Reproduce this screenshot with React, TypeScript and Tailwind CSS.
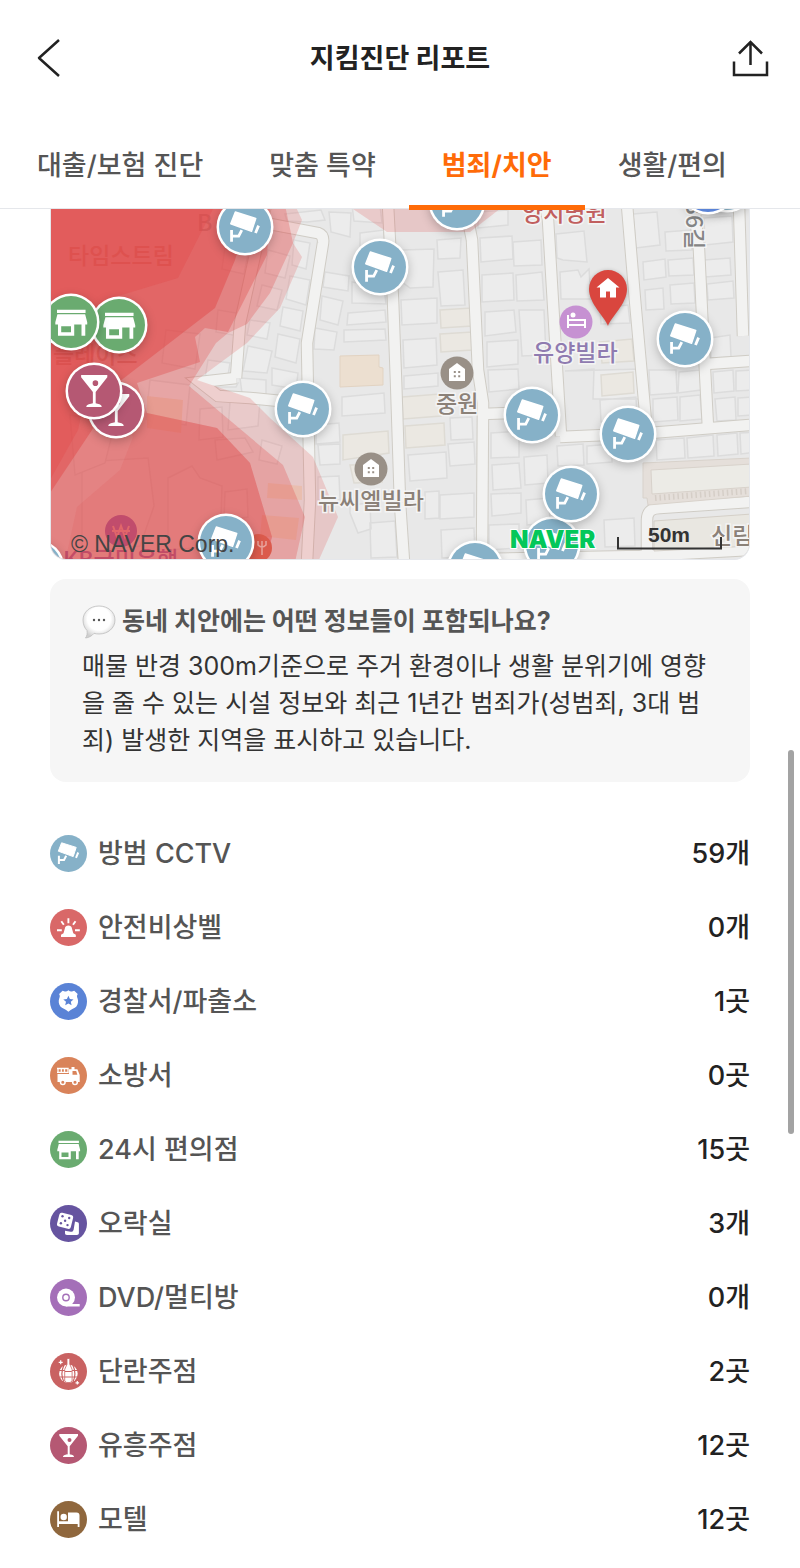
import type { ReactNode } from 'react'

type IconName =
  | 'cctv'
  | 'bell'
  | 'police'
  | 'fire'
  | 'store'
  | 'arcade'
  | 'dvd'
  | 'disco'
  | 'bar'
  | 'motel'

const tabs = ['대출/보험 진단', '맞춤 특약', '범죄/치안', '생활/편의']

const facilities: { icon: IconName; label: string; value: string }[] = [
  { icon: 'cctv', label: '방범 CCTV', value: '59개' },
  { icon: 'bell', label: '안전비상벨', value: '0개' },
  { icon: 'police', label: '경찰서/파출소', value: '1곳' },
  { icon: 'fire', label: '소방서', value: '0곳' },
  { icon: 'store', label: '24시 편의점', value: '15곳' },
  { icon: 'arcade', label: '오락실', value: '3개' },
  { icon: 'dvd', label: 'DVD/멀티방', value: '0개' },
  { icon: 'disco', label: '단란주점', value: '2곳' },
  { icon: 'bar', label: '유흥주점', value: '12곳' },
  { icon: 'motel', label: '모텔', value: '12곳' },
]

const iconColors: Record<IconName, string> = {
  cctv: '#86b1c8',
  bell: '#d96868',
  police: '#5a83d6',
  fire: '#d9835a',
  store: '#6aab70',
  arcade: '#6654a0',
  dvd: '#a46fb8',
  disco: '#c96262',
  bar: '#b55873',
  motel: '#8f673d',
}

// White glyphs, drawn on a 37x37 disc
const glyphs: Record<IconName, ReactNode> = {
  cctv: (
    <>
      <path d="M11.6 7.800 26.200 12.400 23.200 21.600 8.300 16.200Z" fill="#fff" stroke="#fff" strokeLinejoin="round" />
      <path d="M28.200 17.500 26 22.800M8.900 20.700V29M9 25h5l2.200-4.200" fill="none" stroke="#fff" strokeWidth="2" />
    </>
  ),
  bell: (
    <>
      <path d="M15 19c0-3.400 6.800-3.400 6.800 0l1.500 5.200 2.500 1.600V28H11v-2.200l2.500-1.600Z" fill="#fff" />
      <path
        d="M18.400 9.300v5M11.300 12.200l2.500 3.600M25.500 12.200 23 15.800M7 21.300h4.800M25 21.300h4.800"
        stroke="#fff"
        strokeWidth="1.900"
      />
    </>
  ),
  police: (
    <>
      <path
        d="M18.400 7.300c1.200 1 2.400 1.400 3.600 1.100l2.200-.6 3.500 3.200c-1.100 1.700-.7 2.900-.2 4.200 1 2.700.7 6-1.100 8.200-1.800 2-5 2.400-8 5.300-3-2.900-6.200-3.300-8-5.300-1.800-2.200-2.100-5.500-1.100-8.200.5-1.300.9-2.500-.2-4.200l3.500-3.200 2.200.6c1.200.3 2.400-.1 3.600-1.100Z"
        fill="#fff"
      />
      <path
        d="m18.400 12.700 1.500 3.300 3.600.4-2.700 2.400.8 3.500-3.200-1.800-3.200 1.800.8-3.500-2.700-2.400 3.600-.4Z"
        fill="#5a83d6"
      />
    </>
  ),
  fire: (
    <>
      <path d="M7 11.500h11.700M7 15.300h11.700M8 11v5M11.300 11v5M14.500 11v5M18 11v5" stroke="#fff" strokeWidth="1.300" />
      <path d="M7.500 17H19v-4.800h2.500V10h3v2.200h2.900L29.700 18v7H7.500Z" fill="#fff" />
      <path d="M22.500 14h3.700l1.200 3.800h-4.900Z" fill="#d9835a" />
      <circle cx="12.800" cy="25.200" r="2.300" fill="#d9835a" stroke="#fff" strokeWidth="1.500" />
      <circle cx="25" cy="25.200" r="2.300" fill="#d9835a" stroke="#fff" strokeWidth="1.500" />
    </>
  ),
  store: (
    <>
      <path d="M8.500 9.800h20.400v2.200H8.500ZM8.800 13h19.800l1.500 5.700v1.600H7.300v-1.600Z" fill="#fff" />
      <path d="M9.200 20h11.600v8.300H9.200Zm2.300 1.600v4.300h7v-4.300ZM26 20h2.700v8.300H26Z" fill="#fff" fillRule="evenodd" />
    </>
  ),
  arcade: (
    <>
      <rect x="8" y="8.700" width="14.200" height="14.200" rx="2.500" fill="#fff" transform="rotate(14 15 15.700)" />
      <path d="m25 16.500 2.700.7c1 .3 1.200.9 1.200 2V28c0 1.300-.7 2-2 2H17c-1.500 0-2-.8-2-2.200v-2l5.500 1c1.800.3 2.700-.5 3.100-2Z" fill="#fff" />
      <g fill="#6654a0">
        <circle cx="12.500" cy="11.300" r="1.200" />
        <circle cx="19.200" cy="13" r="1.200" />
        <circle cx="15.100" cy="15.700" r="1.200" />
        <circle cx="10.900" cy="18.300" r="1.200" />
        <circle cx="17.500" cy="20.100" r="1.200" />
      </g>
    </>
  ),
  dvd: (
    <>
      <circle cx="16" cy="18.500" r="9" fill="#fff" />
      <path d="M16 25h13.700v2.500H16Z" fill="#fff" />
      <circle cx="16" cy="18.500" r="3.200" fill="none" stroke="#a46fb8" strokeWidth="1.400" />
    </>
  ),
  disco: (
    <>
      <circle cx="18.400" cy="20.700" r="9.300" fill="#fff" />
      <path
        d="M8.500 17.500h20M8.500 24h20M14 12c-2.500 5-2.500 12 0 17.500M22.800 12c2.500 5 2.500 12 0 17.500"
        fill="none"
        stroke="#c96262"
        strokeWidth="1.200"
      />
      <path
        d="M17 5.500h2.800v5.800l2.300 5V28l-2 1.500h-3.400l-2-1.500V16.300l2.300-5Z"
        fill="#fff"
        stroke="#c96262"
        strokeWidth=".8"
      />
      <path d="M15 18.500h6.800M15 24h6.800" stroke="#c96262" />
      <path d="M10.700 7.300v4M8.700 9.300h4M27.300 28v3.600M25.500 29.800h3.600" stroke="#fff" strokeWidth="1.200" />
    </>
  ),
  bar: (
    <path
      d="M9.300 7H28v1.700l-8.300 10.600v7.900c1.500.5 4.300.4 4.300 2.800H13c0-2.400 3.200-2.300 4.700-2.800v-7.900L9.300 8.700Zm10.200 3.900a2 2 0 1 0 0 4 2 2 0 0 0 0-4Z"
      fill="#fff"
      fillRule="evenodd"
    />
  ),
  motel: (
    <>
      <path d="M7.200 10.300H9v10h9v-8.800h8.500c2 0 3 1.200 3 3V26h-1.800v-3H9v3H7.200Z" fill="#fff" />
      <circle cx="13.700" cy="16" r="3.200" fill="#fff" />
    </>
  ),
}

function FacilityIcon({ name }: { name: IconName }) {
  return (
    <svg viewBox="0 0 37 37" className="size-[37px] shrink-0" aria-hidden="true">
      <circle cx="18.500" cy="18.500" r="18.500" fill={iconColors[name]} />
      {glyphs[name]}
    </svg>
  )
}

const pins: { icon: IconName; x: number; y: number }[] = [
  { icon: 'cctv', x: 245, y: 227 },
  { icon: 'cctv', x: 457, y: 202 },
  { icon: 'cctv', x: 380, y: 267 },
  { icon: 'cctv', x: 685, y: 339 },
  { icon: 'cctv', x: 303, y: 409 },
  { icon: 'cctv', x: 532, y: 415 },
  { icon: 'cctv', x: 628, y: 434 },
  { icon: 'cctv', x: 552, y: 545 },
  { icon: 'cctv', x: 571, y: 494 },
  { icon: 'cctv', x: 226, y: 542 },
  { icon: 'cctv', x: 475, y: 569 },
  { icon: 'cctv', x: 36, y: 568 },
  { icon: 'cctv', x: 727, y: 184 },
  { icon: 'police', x: 708, y: 186 },
  { icon: 'store', x: 119, y: 325 },
  { icon: 'store', x: 71, y: 322 },
  { icon: 'bar', x: 116, y: 410 },
  { icon: 'bar', x: 94, y: 391 },
]

function Pin({ icon, x, y }: { icon: IconName; x: number; y: number }) {
  return (
    <g transform={`translate(${x} ${y})`}>
      <circle r="28.500" fill="#fff" className="drop-shadow-[0_3px_5px_rgba(0,0,0,0.22)]" />
      <circle r="26" fill={iconColors[icon]} />
      <g transform="scale(1.4) translate(-18.500 -18.500)">{glyphs[icon]}</g>
    </g>
  )
}

const roads = [
  'M240 219 270 224 318 233Q324 235 323 243L307 343 309 453 310 500 307 562',
  'M266 205 240 323 236 378',
  'M236 378 200 382 218 396 250 398 310 404',
  'M388 205 393 300 396 380 400 503 404 562',
  'M465 205 472 240 478 370 483 403 482 562',
  'M483 414 510 413',
  'M545 205 548 220 557 370 561 436',
  'M627 205 635 300 647 433',
  'M560 437 650 433 750 425',
  'M694 205 699 250 702 313 708 428',
  'M739 205 743 336',
  'M706 364 750 361',
  'M483 559 640 556 750 550',
  'M647 562V520Q647 508 660 508L750 502',
]

const lots = [
  // between the first and second street
  'M285 214l36-4 4 10-18 2-20-1ZM329 212l22 1-1 24-19-5ZM352 205l28 0 2 18-28-2ZM360 233l24-3 2 18-26 0Z',
  'M294 240l16 3-4 26-14-4ZM290 276l20 4-4 25-20-6ZM325 272l24 4-1 15-25-4ZM352 282l32 6 2 16-34-1Z',
  'M322 296l21 5-5 24-18-5ZM283 307l20 4-3 20-20-5ZM348 313l37-3 1 12-39 3ZM344 330l41-1 1 11-42 2Z',
  'M278 334l22 5-4 24-21-6ZM315 328l22 4-3 18-20-1ZM272 368l26 5-2 16-24-4ZM342 397l42-4 1 20-43 3Z',
  'M316 425l23-2 1 19-24 2ZM318 445l22-1 0 20-20 1ZM318 477l21-1 1 24-22 0ZM350 505l20-2 1 26-13 4-8-20ZM370 523l25-2 2 36-26 1Z',
  // middle blocks
  'M402 250l32-1-1 38-23 1-8-6ZM401 300l36-2 0 25-35 2ZM403 340l33-2 1 27-33 3ZM404 376l34-3 0 13-34 3Z',
  'M437 240l24-2-1 20-22 1ZM438 272l25-2 2 35-24 1ZM408 455l38-3 1 26-37 3ZM450 418l22-1 1 22-22 1ZM448 444l26-2 1 22-25 2Z',
  'M425 492l14-1 0 27-14 1ZM440 495l34-2 0 24-34 2ZM441 530l33-2 1 28-33 2Z',
  'M478 212l30-2 0 15-30 3ZM480 238l32-2 1 23-32 3ZM482 275l31-2 1 27-32 2ZM485 312l29-2 2 22-31 4ZM487 342l31-2 0 24-31 3Z',
  'M488 370l30-1 1 20-30 3ZM491 433l28-2 0 26-28 1ZM492 465l27-2 2 25-28 2ZM491 494l30-1 0 20-29 3ZM489 525l30-1 0 24-30 2Z',
  'M513 242l28-2 1 25-28 1ZM516 275l26-3 2 28-27 1ZM519 310l25 0 2 45-24 1Z',
  'M556 234l28-3 3 31-24-2-6-2ZM560 272l18-2 3 7 8-8 2 30-30 0ZM600 308l28-3 2 18-29 1ZM565 371l29-2-1 30 46 0 1-30ZM600 400l36-3 1 22-36 3Z',
  'M524 457l23-2 1 28-23 2ZM557 446l26-2 1 21-26 1ZM587 446l25-2 0 18-25 2ZM526 500l23-2 1 25-23 2ZM604 520l30-2 1 28-30 1Z',
  // east side
  'M633 214l24-2 3 33-24 3ZM665 232l26-2 1 20-26 1ZM643 262l22-3 1 18-22 3ZM668 260l25-2 1 17-25 1ZM645 290l18-2 1 21-18 1Z',
  'M670 285l24-2 1 20-24 1ZM704 260l26-2 1 17-26 2ZM707 284l26-3 1 17-26 2ZM704 218l28-2 1 26-28 3ZM710 338l20-3 1 22-20 1Z',
  'M649 370l27 0 1 23-27 2ZM679 372l21-2 1 20-23 3ZM653 399l24-2 1 23-25 2ZM680 397l20-2 2 24-22 2Z',
  'M713 372l20-2 1 21-20 2ZM736 371l18-1 1 20-19 1ZM715 399l20-2 1 23-19 1ZM738 398l16-1 0 18-16 1Z',
  'M656 440l28-2 1 20-28 2ZM687 438l26-3 1 21-26 2ZM717 435l20-2 1 21-20 2ZM740 433l16-1 0 20-15 2Z',
  // west side, seen through the red zones
  'M210 385l28-2-2 4-22 0ZM218 310l24 4-4 22-22-4ZM248 346l24 5-5 22-24-2ZM250 320l20 3-3 16-20-4ZM208 360l22 3-3 18-22-3Z',
  'M240 378l26 2 0 15-24-2ZM268 250l22 6-5 22-20-5ZM262 285l20 5-5 20-20-4ZM226 240l24 4-6 30-22-5ZM200 409l22-2 1 30-24 3Z',
  'M230 402l30-2-2 26-30 4ZM215 440l30-2 8 14-36 8ZM262 440l20 6-5 18-18-4ZM82 462l66-4 6 48-14 40-58 6ZM168 478l24-12 8 12 22 8-2 60-52 4Z',
  'M70 415l45 8-10 40-30 12ZM166 330l34 4-5 35-33-6ZM150 380l40 5-4 40-40-6ZM225 492l22-3 1 28-24 4Z',
]

const beigeLots = [
  'M440 310l31-2 1 18-31 2ZM440 334l32-2 0 18-31 2ZM402 397l38-3 1 22-38 3ZM405 426l39-3 1 22-39 3Z',
  'M343 435l45-4 1 22-46 7ZM350 465l32-1 0 18-28 1ZM600 342l32-3 2 22-32 2ZM601 375l32-3 1 21-32 3Z',
]

// Every further polygon deepens the red where the crime areas overlap
const dangerZones = [
  {
    points: '50,205 295,205 302,220 293,243 302,257 280,308 247,343 197,380 250,398 270,418 313,457 338,517 318,562 50,562',
    opacity: 0.2,
  },
  { points: '353,209 387,232 470,232 505,205 345,205', opacity: 0.2 },
  {
    points: '50,205 285,205 293,243 270,293 247,324 228,333 216,343 189,386 283,465 305,517 295,562 50,562',
    opacity: 0.27,
  },
  {
    points: '50,205 270,209 267,255 228,332 205,328 195,337 200,362 137,383 147,413 217,428 250,463 272,537 265,562 50,562',
    opacity: 0.35,
  },
  { points: '50,205 250,209 235,260 215,308 137,368 115,385 92,430 50,493', opacity: 0.45 },
  { points: '50,205 215,205 178,278 105,300 78,430 50,480', opacity: 0.3 },
  { points: '120,415 147,413 217,428 250,463 272,537 265,562 65,562 77,507 120,470 133,437', opacity: 0.12 },
]

function BuildingMark({ x, y }: { x: number; y: number }) {
  return (
    <g transform={`translate(${x} ${y})`}>
      <circle r="16.500" fill="#999087" />
      <path d="M-8-4 0-10 8-4V8H-8Z" fill="#fff" />
      <path d="M-3.200-2h2v2h-2ZM1.200-2h2v2h-2ZM-3.200 2.200h2v2h-2ZM1.200 2.200h2v2h-2Z" fill="#999087" />
    </g>
  )
}

function SafetyMap() {
  return (
    <svg
      viewBox="51 209 698 350"
      preserveAspectRatio="xMidYMid slice"
      className="block h-[351px] w-full rounded-b-2xl border-x border-b border-gray-200 bg-[#e8e8e8]"
      role="img"
      aria-label="동네 치안 지도"
    >
      <g fill="#ececec" stroke="#dcdcdc" strokeWidth="1.500">
        {lots.map((d) => (
          <path key={d} d={d} />
        ))}
      </g>
      <g fill="#ebe8e2" stroke="#dedbd4" strokeWidth="1.500">
        {beigeLots.map((d) => (
          <path key={d} d={d} />
        ))}
      </g>
      <path d="M340 356l39-1 0 12 4 1 0 17-43 2Z" fill="#ecdfd0" stroke="#e2d3c2" />
      <path d="M147 396l36 4-2 33-34-5ZM268 483l34 3 0 14-35-2ZM262 515l37 3-3 22-36-4Z" fill="#ecdcca" />

      <g fill="none" stroke="#cfccc5" strokeWidth="12.500">
        {roads.map((d) => (
          <path key={d} d={d} />
        ))}
      </g>
      <g fill="none" stroke="#f2f2f1" strokeWidth="10.500">
        {roads.map((d) => (
          <path key={d} d={d} />
        ))}
      </g>

      <path d="M643 463 752 458V496L648 505 647 498H643Z" fill="#e5dfda" stroke="#d8d2cb" />
      <path d="M651 470 752 464V487L652 494Z" fill="#ecebe6" stroke="#d8d2cb" />
      <path d="M655 498 750 491" stroke="#d5cec7" strokeWidth="6" strokeDasharray="1.500 3" />
      <path d="M654 521 752 514V546L654 551Z" fill="#e9e7e1" stroke="#d4cfc8" />

      <g fontFamily="'Noto Sans CJK KR', sans-serif" fontSize="23" fontWeight="500">
        <text x="68" y="264" fill="#d0a08c">
          타임스트림
        </text>
        <text x="53" y="363" fill="#c09a90">
          플레이스
        </text>
        <text x="197" y="231" fill="#aaa">
          B
        </text>
        <text x="63" y="568" fill="#8a5fb0">
          KB국민은행
        </text>
      </g>
      <circle cx="121" cy="531" r="16" fill="#8560bd" />
      <path d="m113 526 4 11 4-11 4 11 4-11M112 531h18" fill="none" stroke="#e6b0b8" strokeWidth="2" />

      <g fill="#e04444">
        {dangerZones.map((zone) => (
          <polygon key={zone.points} points={zone.points} fillOpacity={zone.opacity} />
        ))}
      </g>

      <circle cx="258" cy="548" r="14" fill="#db5a4c" />
      <path d="M262 541v14M258 541v4q4 4 8 0v-4" fill="none" stroke="#e9a49c" strokeWidth="1.500" />

      <g
        fontFamily="'Noto Sans CJK KR', sans-serif"
        fontSize="23"
        fontWeight="500"
        stroke="#f4f4f4"
        strokeWidth="3"
        paintOrder="stroke"
      >
        <text x="522" y="221" fill="#c15f5f">
          양지병원
        </text>
        <text x="533" y="361" fill="#8f7bb0">
          유양빌라
        </text>
        <text x="436" y="412" fill="#8b8178">
          중원
        </text>
        <text x="318" y="509" fill="#8b8178">
          뉴씨엘빌라
        </text>
        <text x="711" y="544" fill="#8b8178">
          신림
        </text>
        <text transform="translate(686 202) rotate(90)" fill="#858585">
          36길
        </text>
      </g>

      <BuildingMark x={457} y={373} />
      <BuildingMark x={371} y={469} />
      <circle cx="576" cy="322" r="16.500" fill="#c691d2" />
      <path d="M568 315v13M568 325h17v3M568 320h17v5" fill="none" stroke="#fff" strokeWidth="2" />
      <circle cx="573" cy="315" r="2.500" fill="#fff" />

      {pins.map((pin) => (
        <Pin key={`${pin.x}-${pin.y}`} {...pin} />
      ))}

      {/* searched home */}
      <path
        d="M608 326c-3-9-19-22-19-37a19 19 0 0 1 38 0c0 15-16 28-19 37Z"
        fill="#d9463e"
        className="drop-shadow-[0_1px_2px_rgba(0,0,0,0.3)]"
      />
      <path d="m608 278-11.500 9.500h3.500v10h6v-6h4v6h6v-10h3.500Z" fill="#fff" />

      <text x="71" y="552" fontFamily="'Liberation Sans', sans-serif" fontSize="23" fill="#444">
        © NAVER Corp.
      </text>
      <text
        x="510"
        y="548"
        fontFamily="Inter, sans-serif"
        fontSize="24"
        fontWeight="900"
        fill="#03c75a"
        stroke="#fff"
        strokeWidth="2"
        paintOrder="stroke"
      >
        NAVER
      </text>
      <text x="648" y="542" fontFamily="'Liberation Sans', sans-serif" fontSize="21" fontWeight="700" fill="#333">
        50m
      </text>
      <path d="M618 537v11.500h103V537" fill="none" stroke="#333" strokeWidth="2" />
    </svg>
  )
}

function SpeechBubble() {
  return (
    <svg viewBox="0 0 34 34" className="size-[34px] shrink-0" aria-hidden="true">
      <defs>
        <radialGradient id="bubble" cx="50%" cy="40%" r="60%">
          <stop offset="60%" stopColor="#fff" />
          <stop offset="100%" stopColor="#cfcfcf" />
        </radialGradient>
      </defs>
      <path
        d="M17 1c9 0 16 6 16 14s-7 14-16 14c-2 0-3.500-.2-5-.7C10 31 6.500 32.700 3.500 33c1.500-2 2-4.500 1.500-7.500C2.500 23 1 19.300 1 15 1 7 8 1 17 1Z"
        fill="url(#bubble)"
        stroke="#bdbdbd"
        strokeWidth=".8"
      />
      <g fill="#555">
        <circle cx="12" cy="15" r="1.200" />
        <circle cx="17" cy="15" r="1.200" />
        <circle cx="22" cy="15" r="1.200" />
      </g>
    </svg>
  )
}

export default function App() {
  return (
    <div className="relative min-h-screen bg-white font-[Inter,'Noto_Sans_CJK_KR',sans-serif] text-[27px] text-[#222]">
      {/* Header */}
      <header className="border-b border-gray-200">
        <div className="flex h-[116px] items-center justify-between px-[30px]">
          <button type="button" aria-label="뒤로">
            <svg viewBox="0 0 38 38" className="size-[38px]" fill="none" stroke="#222" strokeWidth="2.500">
              <path d="M29 1 9 19l20 18" strokeLinejoin="round" />
            </svg>
          </button>
          <h1 className="pt-0.5 font-bold">지킴진단 리포트</h1>
          <button type="button" aria-label="공유">
            <svg viewBox="0 0 38 38" className="size-[38px]" fill="none" stroke="#222" strokeWidth="2.500">
              <path d="M18.500 26V3M7 14.500 18.500 3 30 14.500M2 22.500V36h33V22.500" />
            </svg>
          </button>
        </div>

        <nav className="flex px-1">
          {tabs.map((tab) => (
            <button
              key={tab}
              type="button"
              className={
                tab === '범죄/치안'
                  ? 'relative h-[92px] px-[33px] pt-2 font-bold whitespace-nowrap text-[#ff6b08] after:absolute after:inset-x-0 after:-bottom-0.5 after:h-[5px] after:bg-[#ff6b08]'
                  : 'h-[92px] px-[33px] pt-2 whitespace-nowrap text-[#555] font-medium'
              }
            >
              {tab}
            </button>
          ))}
        </nav>
      </header>

      <main className="px-[50px] pb-3">
        <SafetyMap />

        {/* Info box */}
        <section className="mt-[19px] rounded-2xl bg-[#f6f6f6] px-8 pt-6 pb-[23px] text-[25px] leading-[37px]">
          <h2 className="flex items-center gap-1.5 font-bold text-[#555]">
            <SpeechBubble />
            동네 치안에는 어떤 정보들이 포함되나요?
          </h2>
          <p className="mt-2 break-all text-[#333]">
            매물 반경 300m기준으로 주거 환경이나 생활 분위기에 영향을 줄 수 있는 시설 정보와 최근 1년간
            범죄가(성범죄, 3대 범죄) 발생한 지역을 표시하고 있습니다.
          </p>
        </section>

        {/* Facility counts */}
        <dl className="mt-[34px]">
          {facilities.map(({ icon, label, value }) => (
            <div key={label} className="flex h-[74px] items-center justify-between font-medium">
              <dt className="flex items-center gap-[11px] text-[#555]">
                <FacilityIcon name={icon} />
                <span className="pt-0.5">{label}</span>
              </dt>
              <dd className="pt-0.5">{value}</dd>
            </div>
          ))}
        </dl>
      </main>

      {/* Scroll thumb */}
      <div className="absolute top-[750px] right-1.5 h-96 w-1.5 rounded-full bg-[#a3a3a3]" />
    </div>
  )
}
